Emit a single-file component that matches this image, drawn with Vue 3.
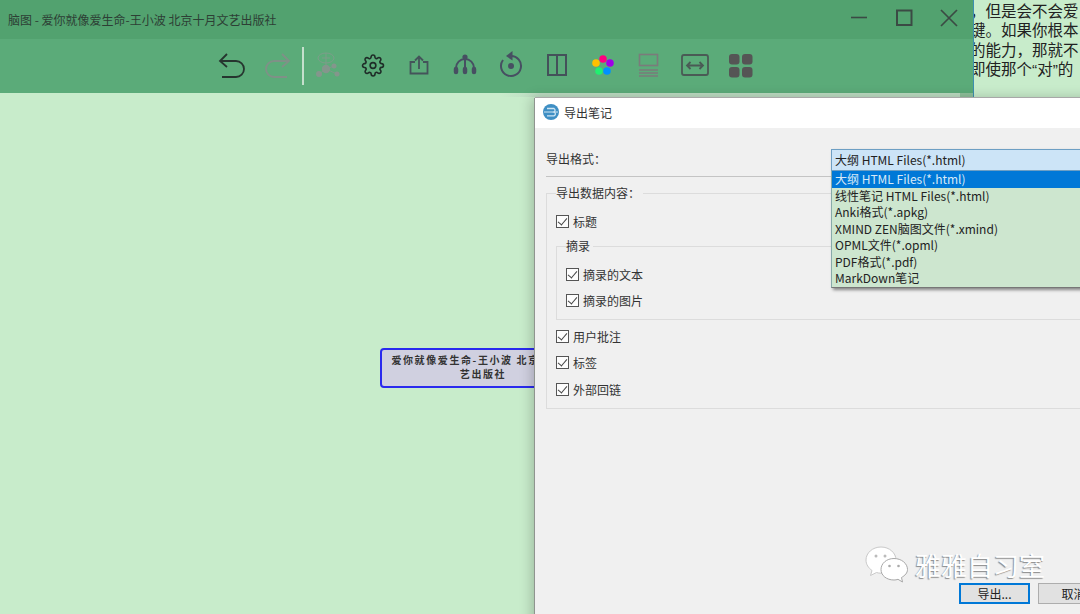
<template>
  <div class="page">
    <div class="top">
      <div class="win">
        <div class="titlebar">
          <span class="title">脑图 - 爱你就像爱生命-王小波 北京十月文艺出版社</span>
          <div class="controls">
            <svg width="121" height="39" viewBox="0 0 121 39" fill="none" stroke="#3b4a44">
              <path d="M0 17.500H16" stroke-width="1.600" />
              <rect x="46" y="10.500" width="14.500" height="14.500" stroke-width="2" />
              <path d="M90 10L106 26M106 10L90 26" stroke-width="1.700" />
            </svg>
          </div>
        </div>
        <div class="toolbar">
          <svg class="tool" viewBox="0 0 46 54" fill="none" stroke="#26352f" stroke-width="1.800">
            <path d="M18 15L11 22L18 28M11 22H27a8 8 0 0 1 0 16H13" />
          </svg>
          <svg class="tool" viewBox="0 0 46 54" fill="none" stroke="#7f9187" stroke-width="1.800">
            <path d="M27 15L34 22L27 28M34 22H19a8 8 0 0 0 0 16H32" />
          </svg>
          <div class="sep"></div>
          <svg class="tool" viewBox="0 0 46 54" fill="#84968c" stroke="none">
            <g fill="none" stroke="#7f9c8b" stroke-width=".9">
              <ellipse cx="22" cy="19" rx="8" ry="5" />
              <path d="M22 14V26M18 19H26" />
            </g>
            <path d="M22 30L30 27M22 30L15 35M22 30L33 35" fill="none" stroke="#84968c" stroke-width=".8" />
            <circle cx="22" cy="30" r="4.200" />
            <circle cx="30" cy="27" r="2.500" />
            <circle cx="15" cy="35" r="3" />
            <circle cx="33" cy="35" r="2.500" />
          </svg>
          <svg class="tool" viewBox="0 0 46 54" fill="none" stroke="#1f2d28" stroke-width="1.700">
            <g transform="translate(11.600 15.100) scale(.95)">
              <circle cx="12" cy="12" r="3" />
              <path d="M19.4 15a1.65 1.65 0 0 0 .33 1.82l.06.06a2 2 0 0 1 0 2.83 2 2 0 0 1-2.83 0l-.06-.06a1.65 1.65 0 0 0-1.82-.33 1.65 1.65 0 0 0-1 1.51V21a2 2 0 0 1-2 2 2 2 0 0 1-2-2v-.09A1.65 1.65 0 0 0 9 19.4a1.65 1.65 0 0 0-1.82.33l-.06.06a2 2 0 0 1-2.83 0 2 2 0 0 1 0-2.83l.06-.06a1.65 1.65 0 0 0 .33-1.82 1.65 1.65 0 0 0-1.51-1H3a2 2 0 0 1-2-2 2 2 0 0 1 2-2h.09A1.65 1.65 0 0 0 4.6 9a1.65 1.65 0 0 0-.33-1.82l-.06-.06a2 2 0 0 1 0-2.83 2 2 0 0 1 2.83 0l.06.06a1.65 1.65 0 0 0 1.82.33H9a1.65 1.65 0 0 0 1-1.51V3a2 2 0 0 1 2-2 2 2 0 0 1 2 2v.09a1.65 1.65 0 0 0 1 1.51 1.65 1.65 0 0 0 1.82-.33l.06-.06a2 2 0 0 1 2.83 0 2 2 0 0 1 0 2.83l-.06.06a1.65 1.65 0 0 0-.33 1.82V9a1.65 1.65 0 0 0 1.51 1H21a2 2 0 0 1 2 2 2 2 0 0 1-2 2h-.09a1.65 1.65 0 0 0-1.51 1z" />
            </g>
          </svg>
          <svg class="tool" viewBox="0 0 46 54" fill="none" stroke="#44545a" stroke-width="1.800">
            <path d="M19 23H14.500V34.500H31.500V23H27M23 30V18M19 21.500L23 17.500L27 21.500" />
          </svg>
          <svg class="tool" viewBox="0 0 46 54" fill="none" stroke="#474f62" stroke-width="2">
            <circle cx="23" cy="18" r="2.600" fill="#474f62" stroke="none" />
            <path d="M23 18V32M14 32V29a9 9 0 0 1 18 0V32" />
            <path d="M14 30V33M23 30V33M32 30V33" stroke-width="4.500" stroke-linecap="round" />
          </svg>
          <svg class="tool" viewBox="0 0 46 54" fill="none" stroke="#474f62" stroke-width="2">
            <path d="M23 17a10 10 0 1 1-8 4" />
            <path d="M24.500 12V21.500L18 17z" fill="#474f62" stroke="none" />
            <circle cx="23" cy="27" r="3" fill="#474f62" stroke="none" />
          </svg>
          <svg class="tool" viewBox="0 0 46 54" fill="none" stroke="#44515a" stroke-width="2">
            <rect x="14" y="16" width="18" height="20" />
            <path d="M23 16V36" />
          </svg>
          <svg class="tool" viewBox="0 0 46 54">
            <circle cx="23" cy="20" r="3.800" fill="#ff0080" />
            <circle cx="30" cy="24" r="3.800" fill="#a000e8" />
            <circle cx="16" cy="24" r="3.800" fill="#ffc000" />
            <circle cx="19" cy="32" r="3.800" fill="#20f070" />
            <circle cx="27" cy="32" r="3.800" fill="#0090ff" />
          </svg>
          <svg class="tool" viewBox="0 0 46 54" fill="none" stroke="#7b7b7b" stroke-width="1.600">
            <rect x="13.500" y="15.500" width="18" height="11" />
            <path d="M13 31H32M13 34H32M13 37H32" />
          </svg>
          <svg class="tool" viewBox="0 0 46 54" fill="none" stroke="#4a5a55" stroke-width="1.800">
            <rect x="10" y="16" width="26" height="20" rx="2" />
            <path d="M15 26.500H31M18.500 23L15 26.500L18.500 30M27.500 23L31 26.500L27.500 30" />
          </svg>
          <svg class="tool" viewBox="0 0 46 54" fill="#555">
            <rect x="11" y="15" width="10.500" height="10.500" rx="3" />
            <rect x="24" y="15" width="10.500" height="10.500" rx="3" />
            <rect x="11" y="28" width="10.500" height="10.500" rx="3" />
            <rect x="24" y="28" width="10.500" height="10.500" rx="3" />
          </svg>
        </div>
        <div class="strip"><div class="thumb"></div></div>
      </div>
      <div class="side">
        <p v-for="line in sideLines" :key="line">{{ line }}</p>
      </div>
    </div>

    <div class="node">爱你就像爱生命-王小波 北京十月文艺出版社</div>

    <div class="dialog">
      <div class="dlg-head">
        <svg width="16" height="16" viewBox="0 0 16 16">
          <circle cx="8" cy="8" r="8" fill="#3f8fc4" />
          <path d="M4 4.500H11a2 2 0 0 1 0 3.500a2 2 0 0 1 0 3.800H4" fill="none" stroke="#cfe5f3" stroke-width="1.300" />
          <path d="M1 8H15" stroke="#cfe5f3" stroke-width="1" />
        </svg>
        <span>导出笔记</span>
      </div>
      <div class="dlg-body">
        <div class="format">导出格式：</div>
        <fieldset class="group outer">
          <legend>导出数据内容：</legend>
          <label class="check first"><i class="box"></i>标题</label>
          <fieldset class="group inner">
            <legend>摘录</legend>
            <label class="check"><i class="box"></i>摘录的文本</label>
            <label class="check"><i class="box"></i>摘录的图片</label>
          </fieldset>
          <label class="check"><i class="box"></i>用户批注</label>
          <label class="check"><i class="box"></i>标签</label>
          <label class="check"><i class="box"></i>外部回链</label>
        </fieldset>
      </div>
    </div>

    <div class="select">
      <div class="current">大纲 HTML Files(*.html)</div>
      <ul>
        <li v-for="(opt, i) in options" :key="opt" :class="{ on: i === 0 }">{{ opt }}</li>
      </ul>
    </div>

    <div class="buttons">
      <button class="primary">导出...</button>
      <button>取消</button>
    </div>

    <div class="mark">
      <svg width="44" height="38" viewBox="0 0 44 38">
        <path d="M16 1C7.500 1 1 7 1 14c0 4.500 2.500 8 6 10.500L5.500 29.500L11.500 26.500C13 27 14.500 27.200 16 27.200C25 27.200 31 21 31 14C31 7 24.500 1 16 1z" fill="#fff" stroke="#c9c9c9" />
        <path d="M29 12.500C21.500 12.500 16 17.500 16 23.500C16 29.500 21.500 34 29 34C30.500 34 31.500 33.800 33 33.300L37.500 36L36.500 31.500C40 29.500 42.500 27 42.500 23.500C42.500 17.500 36.500 12.500 29 12.500z" fill="#fff" stroke="#a8a8a8" />
        <circle cx="11" cy="10" r="1.500" fill="#bbb" />
        <circle cx="20" cy="10" r="1.500" fill="#bbb" />
        <circle cx="24.500" cy="20" r="1.300" fill="#aaa" />
        <circle cx="33.500" cy="20" r="1.300" fill="#aaa" />
      </svg>
      <span>雅雅自习室</span>
    </div>
  </div>
</template>

<script setup>
const sideLines = [
  '，但是会不会爱',
  '键。如果你根本',
  '的能力，那就不',
  '即使那个“对”的',
]

const options = [
  '大纲 HTML Files(*.html)',
  '线性笔记 HTML Files(*.html)',
  'Anki格式(*.apkg)',
  'XMIND ZEN脑图文件(*.xmind)',
  'OPML文件(*.opml)',
  'PDF格式(*.pdf)',
  'MarkDown笔记',
]
</script>

<style scoped>
.page {
  position: relative;
  width: 1080px;
  height: 614px;
  overflow: hidden;
  background: #c8eccb;
  font-family: "Noto Sans CJK SC", "Liberation Sans", sans-serif;
  font-size: 12px;
  color: #222;
}
.top {
  display: flex;
  height: 97px;
}
.win {
  width: 974px;
  flex-shrink: 0;
  box-sizing: border-box;
  border-right: 1px solid #3d8fb0;
}
.titlebar {
  display: flex;
  align-items: center;
  justify-content: space-between;
  height: 39px;
  padding-left: 8px;
  padding-right: 1px;
  background: #52a26f;
}
.title {
  font-size: 12px;
  color: #2d3f35;
}
.controls {
  height: 39px;
}
.toolbar {
  display: flex;
  align-items: center;
  height: 54px;
  padding-left: 209px;
  background: #5bab79;
}
.tool {
  width: 46px;
  height: 54px;
  flex-shrink: 0;
}
.sep {
  width: 2px;
  height: 38px;
  margin: 0 0.500px;
  background: #c5dfcd;
}
.strip {
  display: flex;
  justify-content: flex-end;
  height: 4px;
  background: linear-gradient(90deg, #c8eccb 500px, #bcdcc2 540px);
}
.thumb {
  width: 13px;
  background: #8fc09b;
}
.side {
  flex: 1;
  overflow: hidden;
  padding-top: 2px;
}
.side p {
  margin: 0 0 0 -4px;
  height: 19.300px;
  line-height: 19.300px;
  font-family: "Liberation Sans", "Noto Sans CJK SC", sans-serif;
  font-size: 15.500px;
  white-space: nowrap;
  color: #222;
}
.node {
  position: absolute;
  left: 380px;
  top: 348px;
  width: 206px;
  height: 40px;
  box-sizing: border-box;
  padding: 3px 6px;
  border: 2px solid #2a2aee;
  border-radius: 4px;
  background: #d0d0e0;
  font-family: "Noto Sans CJK SC", serif;
  font-size: 10px;
  font-weight: 700;
  line-height: 14px;
  letter-spacing: 1.600px;
  text-align: center;
  color: #333;
}
.dialog {
  position: absolute;
  left: 535px;
  top: 98px;
  width: 560px;
  height: 530px;
  background: #f0f0f0;
  box-shadow: 0 -1px 0 #a8a8a8, -1px 0 0 #8f948f, -3px 0 12px rgba(0, 0, 0, 0.22);
}
.dlg-head {
  display: flex;
  align-items: center;
  gap: 5px;
  height: 30px;
  padding: 0 0 2px 8px;
  box-sizing: border-box;
  background: #fff;
  font-size: 12px;
  color: #333;
}
.dlg-body {
  padding: 0 0 0 11px;
}
.format {
  height: 49px;
  line-height: 62px;
  box-sizing: border-box;
  border-bottom: 1.500px solid #c4c4c4;
  color: #333;
  font-size: 12px;
}
.group {
  margin: 0;
  border: 1px solid #dcdcdc;
  min-inline-size: auto;
}
.group legend {
  padding: 0 3px 0 0;
  color: #333;
  line-height: 14px;
}
.outer {
  height: 221px;
  margin-top: 9px;
  padding: 0 0 0 9px;
}
.inner {
  height: 79px;
  margin: 0 0 3px 0;
  padding: 0 0 0 9px;
}
.check {
  display: flex;
  align-items: center;
  gap: 4px;
  height: 26.300px;
  color: #333;
}
.first {
  margin: 8px 0 5px 0;
}
.inner .check {
  position: relative;
  top: 8px;
}
.box {
  position: relative;
  width: 11px;
  height: 11px;
  border: 1px solid #555;
  background: #fdfdfd;
}
.box::after {
  content: "";
  position: absolute;
  left: 3px;
  top: 0;
  width: 4px;
  height: 8px;
  border: solid #444;
  border-width: 0 1.300px 1.300px 0;
  transform: rotate(40deg);
}
.select {
  position: absolute;
  left: 831px;
  top: 149px;
  width: 260px;
  box-shadow: 2px 2px 3px rgba(0, 0, 0, 0.45);
}
.current {
  height: 22px;
  box-sizing: border-box;
  padding-left: 3px;
  border: 1px solid #6d9fc4;
  background: #cce4f7;
  line-height: 19px;
  color: #222;
}
.select ul {
  margin: 0;
  padding: 0;
  list-style: none;
  background: #cde6cf;
  border-left: 1px solid #8aa;
  border-bottom: 1px solid #777;
}
.select li {
  height: 16.500px;
  padding-left: 3px;
  line-height: 16.500px;
  color: #222;
}
.select li.on {
  background: #0078d7;
  color: #d8eaf8;
}
.buttons {
  position: absolute;
  left: 959px;
  top: 583px;
  display: flex;
  gap: 8px;
}
.buttons button {
  width: 71px;
  height: 21px;
  padding: 0;
  border: 1px solid #adadad;
  background: #e1e1e1;
  font: 12px "Noto Sans CJK SC", sans-serif;
  color: #222;
}
.buttons .primary {
  border: 2px solid #0078d7;
}
.mark {
  position: absolute;
  left: 865px;
  top: 546px;
  display: flex;
  align-items: center;
  gap: 6px;
}
.mark span {
  font-size: 26px;
  line-height: 38px;
  color: #fff;
  text-shadow: -1px 1px 1px #8a8a8a;
}
</style>
